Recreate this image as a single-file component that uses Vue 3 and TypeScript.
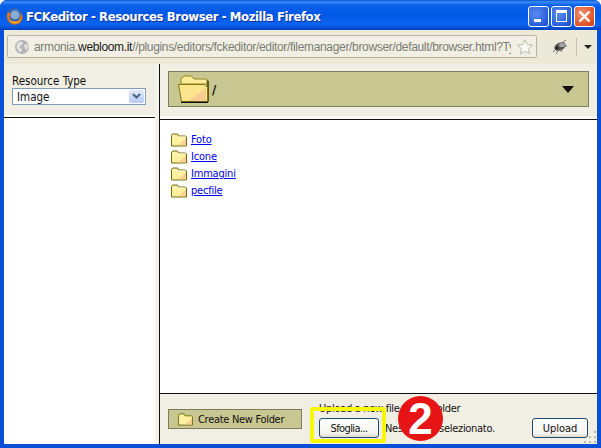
<script setup lang="ts">
const folders = ['Foto', 'Icone', 'Immagini', 'pecfile']
const gripDots = [
  [10, 0], [5, 5], [10, 5], [0, 10], [5, 10], [10, 10],
]
</script>

<template>
  <div class="window">
    <header class="titlebar">
      <svg class="ff-logo" width="17" height="17" viewBox="0 0 16 16">
        <circle cx="8" cy="8" r="7.700" fill="#3a6aa8" />
        <circle cx="8.500" cy="6.500" r="4.200" fill="#86acd4" />
        <path d="M1.800 3.500C.8 6 .6 9 2 11.500c1.600 3 4.400 4.300 7 4 3-.3 5.700-2.500 6.300-5.500.4-2-.1-4.200-1.300-5.800.3 1.600 0 3-.8 3.800.1 2.500-1.700 4.800-4.700 5-2.200.1-4-1-4.700-2.700-.6-1.600-.3-3.300.9-4.700C3.300 4.600 2.400 4.200 1.800 3.500z" fill="#e2701a" />
        <path d="M3 11.500c1.500 2.500 4 3.300 6.500 2.900 2.200-.4 3.800-1.800 4.500-3.700-1.500 1.600-3.500 2.400-5.800 2.100C6 12.500 4.300 12.300 3 11.500z" fill="#f6b026" />
      </svg>
      <span class="title-text">FCKeditor - Resources Browser - Mozilla Firefox</span>
      <div class="win-buttons">
        <button class="win-btn blue"><span class="glyph-min"></span></button>
        <button class="win-btn blue"><span class="glyph-max"></span></button>
        <button class="win-btn red">
          <svg width="13" height="13" viewBox="0 0 13 13">
            <path d="M1.500 1.500l10 10M11.500 1.500l-10 10" stroke="#fff" stroke-width="2.400" fill="none" />
          </svg>
        </button>
      </div>
    </header>

    <div class="body">
      <div class="toolbar">
        <div class="urlbar">
          <svg class="globe" width="16" height="16" viewBox="0 0 16 16">
            <circle cx="8" cy="8" r="7" fill="#b4b4b4" />
            <path d="M4 3.500c2-1 4-1 5 0L8 6 5.500 7 6 9l2 1-1 3.500C5 12 3.500 11 2.500 8.500 2.500 6.500 3 5 4 3.500z" fill="#e4e4e4" />
            <path d="M11 5l3 .5.500 3-2 3-1.500-2-1-2.500z" fill="#dcdcdc" />
          </svg>
          <span class="url"><span class="dim">armonia.</span>webloom.it<span class="dim">//plugins/editors/fckeditor/editor/filemanager/browser/default/browser.html?Type=Image</span></span>
          <svg class="star" width="16" height="16" viewBox="0 0 16 16">
            <path d="M8 .8l2.200 4.800 5.200.6-3.900 3.500 1.100 5.200L8 12.300l-4.600 2.600 1.100-5.200L.6 6.200l5.200-.6z" fill="#fbfbf6" stroke="#b9b8a6" />
          </svg>
        </div>
        <svg class="bug" width="18" height="16" viewBox="0 0 18 16">
          <path d="M2 13l3-3M15 1l-3 2M16 7l-3 0M5 15l2-3M10 13l1-2" stroke="#777" fill="none" />
          <ellipse cx="9" cy="7.500" rx="6" ry="3.800" transform="rotate(-25 9 7.500)" fill="#555" />
          <ellipse cx="11" cy="6" rx="3" ry="2" fill="#a5a5a5" />
          <circle cx="6" cy="9" r="1.500" fill="#222" />
        </svg>
        <span class="tool-sep"></span>
        <span class="tool-arrow"></span>
      </div>

      <div class="frames">
        <aside class="left">
          <div class="left-top">
            <label class="res-label">Resource Type</label>
            <div class="select">
              <span>Image</span>
              <span class="select-btn">
                <svg width="9" height="7" viewBox="0 0 9 7">
                  <path d="M1 1l3.500 3.500L8 1" stroke="#4d6185" stroke-width="2" fill="none" />
                </svg>
              </span>
            </div>
          </div>
          <div class="left-main"></div>
        </aside>

        <main class="right">
          <div class="right-top">
            <div class="path-box">
              <svg width="34" height="28" viewBox="0 0 34 28">
                <path d="M3 9V4l3-3h7l3 3h12l1 1v4z" fill="#fdeb9a" stroke="#8f8a20" />
                <path d="M29 5l2 1v21h-2z" fill="#5f5c10" />
                <path d="M.5 9.500h26l3 3V26.500H3.500z" fill="#fbe58f" stroke="#7c7a10" />
                <path d="M12 25l16-12v13H12z" fill="#f6bf95" opacity=".65" />
                <path d="M3 27.500h27" stroke="#111" stroke-width="1.500" />
              </svg>
              <span class="path-text">/</span>
              <span class="path-arrow"></span>
            </div>
          </div>

          <div class="file-list">
            <div v-for="name in folders" :key="name" class="file-row">
              <svg class="small-folder" width="16" height="14" viewBox="0 0 16 14">
                <path d="M.5 13V2.500l1-1.500h5l1 2h7l1 1v9z" fill="#fdf09f" stroke="#6d6d12" />
                <path d="M7 12.500l8-7v7z" fill="#f4c48a" opacity=".7" />
                <path d="M1.500 4h13" stroke="#fffbd0" />
              </svg>
              <a class="file-link" href="#">{{ name }}</a>
            </div>
          </div>

          <div class="bottom">
            <button class="create-btn">
              <svg width="15" height="13" viewBox="0 0 16 14">
                <path d="M.5 13V2.500l1-1.500h5l1 2h7l1 1v9z" fill="#fdf09f" stroke="#6d6d12" />
                <path d="M7 12.500l8-7v7z" fill="#f4c48a" opacity=".7" />
              </svg>
              Create New Folder
            </button>
            <div class="upload-form">
              <div class="upload-label">Upload a new file in this folder</div>
              <div class="upload-row">
                <button class="xp-btn browse">Sfoglia...</button>
                <span class="no-file">Nessun file selezionato.</span>
                <button class="xp-btn upload">Upload</button>
              </div>
            </div>
            <span class="grip">
              <i v-for="(d, i) in gripDots" :key="i" :style="{ left: d[0] + 'px', top: d[1] + 'px' }"></i>
            </span>
          </div>
        </main>
      </div>
    </div>

    <!-- annotation over the screenshot -->
    <div class="highlight"></div>
    <div class="step">2</div>
  </div>
</template>

<style scoped>
.window {
  position: relative;
  width: 601px;
  height: 448px;
  overflow: hidden;
  box-sizing: border-box;
  display: flex;
  flex-direction: column;
  border-radius: 7px 7px 0 0;
  background: #0a4fd8;
  font-family: "DejaVu Sans Condensed", "DejaVu Sans", sans-serif;
  font-stretch: condensed;
  font-size: 11px;
  color: #111;
}

.titlebar {
  height: 30px;
  flex: none;
  display: flex;
  align-items: center;
  padding: 2px 6px 0 6px;
  box-sizing: border-box;
  background: linear-gradient(180deg, #0a57d6 0, #3b8cf5 2px, #0a62ea 5px, #0258e6 14px, #0a64f0 24px, #0450d4 28px, #0340b8 30px);
}
.ff-logo {
  flex: none;
  margin-right: 3px;
}
.title-text {
  color: #fff;
  font-weight: 700;
  font-size: 13px;
  letter-spacing: -0.42px;
  text-shadow: 1px 1px 0 #0a2f9c;
  white-space: nowrap;
}
.win-buttons {
  margin-left: auto;
  display: flex;
  gap: 2px;
}
.win-btn {
  width: 21px;
  height: 21px;
  padding: 0;
  border: 1px solid #fff;
  border-radius: 3px;
  display: flex;
  align-items: center;
  justify-content: center;
  position: relative;
}
.win-btn.blue {
  background: radial-gradient(circle at 35% 35%, #5b8cf0, #2a5fdc 70%, #1c48c0);
}
.win-btn.red {
  background: radial-gradient(circle at 35% 35%, #f0936e, #df5328 70%, #c03a12);
}
.glyph-min {
  position: absolute;
  left: 5px;
  bottom: 4px;
  width: 7px;
  height: 3px;
  background: #fff;
}
.glyph-max {
  width: 9px;
  height: 8px;
  border: 1px solid #fff;
  border-top-width: 3px;
}

.body {
  flex: 1;
  min-height: 0;
  margin: 0 4px 4px;
  display: flex;
  flex-direction: column;
  background: #ece9d8;
}

.toolbar {
  height: 34px;
  flex: none;
  display: flex;
  align-items: center;
  box-sizing: border-box;
  padding: 0 0 4px 3px;
  background: #ece9d8;
}
.urlbar {
  width: 530px;
  height: 23px;
  margin-top: 3px;
  box-sizing: border-box;
  flex: none;
  display: flex;
  align-items: center;
  border: 1px solid #b5b3a3;
  border-radius: 2px;
  background: #f1efe3;
  padding: 0 3px 0 6px;
  overflow: hidden;
}
.globe {
  flex: none;
  margin-right: 4px;
}
.url {
  flex: 1;
  min-width: 0;
  overflow: hidden;
  white-space: nowrap;
  font-family: "Liberation Sans", Arial, sans-serif;
  font-size: 12px;
  letter-spacing: -0.33px;
  color: #1a1a1a;
}
.dim {
  color: #7c7c74;
}
.star {
  flex: none;
  margin-left: 6px;
}
.bug {
  flex: none;
  margin: 3px 0 0 14px;
}
.tool-sep {
  flex: none;
  width: 1px;
  height: 18px;
  margin: 3px 0 0 7px;
  background: #c2c0ae;
}
.tool-arrow {
  flex: none;
  margin: 3px 0 0 7px;
  width: 0;
  height: 0;
  border-left: 4px solid transparent;
  border-right: 4px solid transparent;
  border-top: 4px solid #222;
}

.frames {
  flex: 1;
  min-height: 0;
  display: flex;
}
.left {
  width: 151px;
  flex: none;
  display: flex;
  flex-direction: column;
  padding-right: 4px;
  border-right: 1px solid #111;
  background: #f4f3ea;
}
.left-top {
  height: 54px;
  flex: none;
  box-sizing: border-box;
  padding: 11px 0 0 8px;
  background: #f1efe3;
  border-bottom: 1px solid #111;
  box-shadow: 0 -2px 0 #fbfaf3 inset;
  font-size: 11.5px;
}
.res-label {
  display: block;
  line-height: 12px;
}
.select {
  width: 134px;
  height: 17px;
  margin-top: 1px;
  box-sizing: border-box;
  display: flex;
  align-items: center;
  justify-content: space-between;
  border: 1px solid #7f9db9;
  background: #fff;
  padding: 1px 1px 1px 4px;
}
.select-btn {
  width: 15px;
  height: 13px;
  display: flex;
  align-items: center;
  justify-content: center;
  background: linear-gradient(180deg, #e2ebfd, #b6c9f0);
  border-radius: 2px;
}
.left-main {
  flex: 1;
  background: #fff;
}

.right {
  flex: 1;
  min-width: 0;
  display: flex;
  flex-direction: column;
}
.right-top {
  height: 56px;
  flex: none;
  box-sizing: border-box;
  padding: 7px 8px 0;
  background: #f1efe3;
  border-bottom: 1px solid #111;
  box-shadow: 0 -3px 0 #fbfaf3 inset;
}
.path-box {
  height: 36px;
  box-sizing: border-box;
  display: flex;
  align-items: center;
  padding: 0 14px 0 9px;
  background: #c8c791;
  border: 1px solid #7d7c5b;
}
.path-box svg {
  flex: none;
}
.path-text {
  font-weight: 700;
  font-size: 13px;
}
.path-arrow {
  margin-left: auto;
  width: 0;
  height: 0;
  border-left: 6px solid transparent;
  border-right: 6px solid transparent;
  border-top: 7px solid #111;
}

.file-list {
  flex: 1;
  background: #fff;
  padding: 11px 0 0 11px;
}
.file-row {
  height: 17px;
  display: flex;
  align-items: center;
  gap: 4px;
}
.small-folder {
  flex: none;
}
.file-link {
  color: #0000ee;
  text-decoration: underline;
  letter-spacing: -0.2px;
}

.bottom {
  position: relative;
  height: 51px;
  flex: none;
  box-sizing: border-box;
  display: flex;
  border-top: 1px solid #111;
  background: #f1efe3;
  padding: 15px 0 0 8px;
  letter-spacing: -0.3px;
}
.create-btn {
  width: 134px;
  height: 20px;
  flex: none;
  box-sizing: border-box;
  display: flex;
  align-items: center;
  gap: 5px;
  padding: 0 0 0 9px;
  background: #c8c791;
  border: 1px solid #7d7c5b;
  font: inherit;
  letter-spacing: inherit;
  color: #111;
}
.upload-form {
  flex: 1;
  margin-left: 17px;
  margin-top: -7px;
}
.upload-label {
  line-height: 14px;
  height: 13px;
}
.upload-row {
  display: flex;
  align-items: center;
  margin-top: 3px;
}
.xp-btn {
  height: 20px;
  box-sizing: border-box;
  padding: 0;
  border: 1px solid #1f4a74;
  border-radius: 3px;
  background: linear-gradient(180deg, #fff, #f4f3ec 80%, #dcd9cb);
  font: inherit;
  color: #111;
}
.browse {
  width: 60px;
  flex: none;
  letter-spacing: -0.6px;
}
.no-file {
  margin-left: 6px;
  white-space: nowrap;
}
.upload {
  width: 56px;
  flex: none;
  margin-left: auto;
  margin-right: 9px;
  letter-spacing: 0;
}
.grip {
  position: absolute;
  right: 0;
  bottom: 0;
  width: 13px;
  height: 13px;
}
.grip i {
  position: absolute;
  width: 2px;
  height: 2px;
  background: #bdbaa9;
}

.highlight {
  position: absolute;
  left: 310px;
  top: 407px;
  width: 76px;
  height: 36px;
  box-sizing: border-box;
  border: 4px solid #f8f80a;
  border-radius: 2px;
}
.step {
  position: absolute;
  left: 398px;
  top: 396px;
  width: 45px;
  height: 45px;
  border-radius: 50%;
  background: #e61414;
  color: #fff;
  font-family: "Liberation Sans", Arial, sans-serif;
  font-weight: 700;
  font-size: 44px;
  line-height: 45px;
  text-align: center;
}
</style>

<style>
html, body {
  margin: 0;
  background: #fff;
}
</style>
